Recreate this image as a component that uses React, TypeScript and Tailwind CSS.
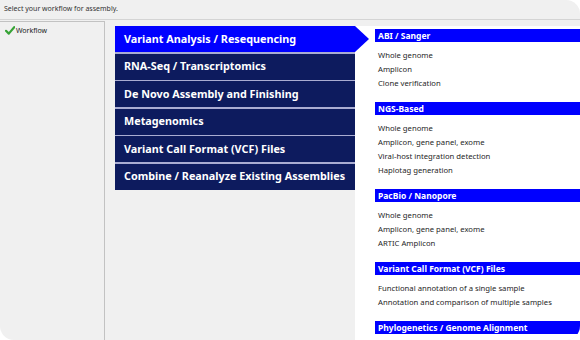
import React from 'react';

const workflows = [
  'Variant Analysis / Resequencing',
  'RNA-Seq / Transcriptomics',
  'De Novo Assembly and Finishing',
  'Metagenomics',
  'Variant Call Format (VCF) Files',
  'Combine / Reanalyze Existing Assemblies',
];

const sections = [
  { title: 'ABI / Sanger', items: ['Whole genome', 'Amplicon', 'Clone verification'] },
  {
    title: 'NGS-Based',
    items: ['Whole genome', 'Amplicon, gene panel, exome', 'Viral-host integration detection', 'Haplotag generation'],
  },
  { title: 'PacBio / Nanopore', items: ['Whole genome', 'Amplicon, gene panel, exome', 'ARTIC Amplicon'] },
  {
    title: 'Variant Call Format (VCF) Files',
    items: ['Functional annotation of a single sample', 'Annotation and comparison of multiple samples'],
  },
  { title: 'Phylogenetics / Genome Alignment', items: [] },
];

const CheckIcon = () => (
  <svg width="10" height="9" viewBox="0 0 10 9" className="shrink-0">
    <path d="M1 4.8 L3.8 7.6 L9.2 1.2" fill="none" stroke="#36a336" strokeWidth="2.2" strokeLinecap="round" strokeLinejoin="round" />
  </svg>
);

export default function App() {
  return (
    <div className="bg-white w-[580px] h-[340px]">
      <div
        className="w-[580px] h-[340px] bg-[#f0f0f0] overflow-hidden rounded-tr-[14px] rounded-br-[14px] rounded-bl-[14px] flex flex-col"
        style={{ fontFamily: '"Noto Sans", "Open Sans", sans-serif' }}
      >
        {/* Top prompt */}
        <div className="h-[20px] shrink-0 border-b border-[#d4d4d4] px-[4px] flex items-center text-[7px] text-[#333]">
          Select your workflow for assembly.
        </div>

        <div className="flex flex-1 min-h-0">
          {/* Tree */}
          <div className="w-[105px] shrink-0 border-r border-t border-[#c2c2c2] pt-[4px] pl-[5px] mt-[1px]">
            <div className="flex items-center gap-[1px] text-[7px] text-[#222] leading-[9px]">
              <CheckIcon />
              <span>Workflow</span>
            </div>
          </div>

          {/* Workflow list */}
          <div className="w-[250px] shrink-0 pl-[10px] pt-[6px]">
            <div className="flex flex-col gap-[1.5px] bg-[#a9acd2] w-[240px]">
              {workflows.map((w, i) => (
                <div
                  key={w}
                  className={`relative h-[26px] flex items-center pl-[9px] text-[10.8px] font-bold text-white ${
                    i === 0 ? 'bg-[#0000ff]' : 'bg-[#0d1b5e]'
                  }`}
                >
                  {w}
                  {i === 0 && (
                    <div className="absolute right-[-14px] top-0 w-0 h-0 border-y-[13px] border-y-transparent border-l-[14px] border-l-[#0000ff] z-10" />
                  )}
                </div>
              ))}
            </div>
          </div>

          {/* Options panel */}
          <div className="flex-1 bg-white mt-[6px] pl-[20px] pt-[3px]">
            {sections.map((s) => (
              <div key={s.title}>
                <div className="h-[13px] bg-[#0000ff] text-white font-bold text-[8.5px] leading-[13px] pl-[3px]">
                  {s.title}
                </div>
                {s.items.length > 0 && (
                  <div className="pt-[6px] pb-[12px] pl-[3px]">
                    {s.items.map((it) => (
                      <div key={it} className="h-[14px] leading-[14px] text-[7.7px] text-[#262626]">
                        {it}
                      </div>
                    ))}
                  </div>
                )}
              </div>
            ))}
          </div>
        </div>
      </div>
    </div>
  );
}
